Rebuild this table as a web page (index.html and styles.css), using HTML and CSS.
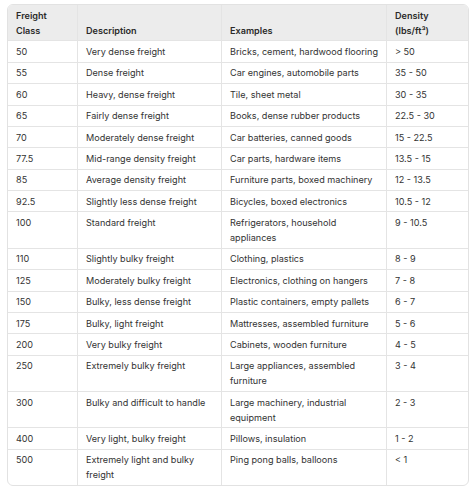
FILE: index.html
```html
<!DOCTYPE html>
<html lang="en">
<head>
<meta charset="utf-8">
<title>Freight Classes</title>
<link rel="stylesheet" href="styles.css">
</head>
<body>
<div class="table-wrap">
<table class="freight">
<thead>
<tr><th class="c1">Freight Class</th><th class="c2">Description</th><th class="c3">Examples</th><th class="c4">Density (lbs/ft³)</th></tr>
</thead>
<tbody>
<tr><td>50</td><td>Very dense freight</td><td>Bricks, cement, hardwood flooring</td><td>&gt; 50</td></tr>
<tr><td>55</td><td>Dense freight</td><td>Car engines, automobile parts</td><td>35 - 50</td></tr>
<tr><td>60</td><td>Heavy, dense freight</td><td>Tile, sheet metal</td><td>30 - 35</td></tr>
<tr><td>65</td><td>Fairly dense freight</td><td>Books, dense rubber products</td><td>22.5 - 30</td></tr>
<tr><td>70</td><td>Moderately dense freight</td><td>Car batteries, canned goods</td><td>15 - 22.5</td></tr>
<tr><td>77.5</td><td>Mid-range density freight</td><td>Car parts, hardware items</td><td>13.5 - 15</td></tr>
<tr><td>85</td><td>Average density freight</td><td>Furniture parts, boxed machinery</td><td>12 - 13.5</td></tr>
<tr><td>92.5</td><td>Slightly less dense freight</td><td>Bicycles, boxed electronics</td><td>10.5 - 12</td></tr>
<tr><td>100</td><td>Standard freight</td><td>Refrigerators, household appliances</td><td>9 - 10.5</td></tr>
<tr><td>110</td><td>Slightly bulky freight</td><td>Clothing, plastics</td><td>8 - 9</td></tr>
<tr><td>125</td><td>Moderately bulky freight</td><td>Electronics, clothing on hangers</td><td>7 - 8</td></tr>
<tr><td>150</td><td>Bulky, less dense freight</td><td>Plastic containers, empty pallets</td><td>6 - 7</td></tr>
<tr><td>175</td><td>Bulky, light freight</td><td>Mattresses, assembled furniture</td><td>5 - 6</td></tr>
<tr><td>200</td><td>Very bulky freight</td><td>Cabinets, wooden furniture</td><td>4 - 5</td></tr>
<tr><td>250</td><td>Extremely bulky freight</td><td>Large appliances, assembled furniture</td><td>3 - 4</td></tr>
<tr><td>300</td><td>Bulky and difficult to handle</td><td>Large machinery, industrial equipment</td><td>2 - 3</td></tr>
<tr><td>400</td><td>Very light, bulky freight</td><td>Pillows, insulation</td><td>1 - 2</td></tr>
<tr><td>500</td><td>Extremely light and bulky freight</td><td>Ping pong balls, balloons</td><td>&lt; 1</td></tr>
</tbody>
</table>
</div>
</body>
</html>
```
FILE: styles.css
```css
html, body {
  margin: 0;
  padding: 0;
  background: #ffffff;
}
body {
  padding: 4px 0 0 7px;
  font-family: Inter, "Liberation Sans", sans-serif;
  font-size: 9.1px;
  line-height: 15px;
  color: #333333;
}
.table-wrap {
  width: 462px;
  border: 1px solid #e2e2e2;
  border-radius: 6px;
  overflow: hidden;
  box-sizing: border-box;
}
.freight {
  width: 100%;
  border-collapse: separate;
  border-spacing: 0;
  table-layout: fixed;
}
.freight th,
.freight td {
  box-sizing: border-box;
  padding: 2.7px 7px 2.7px 8px;
  text-align: left;
  border-right: 1px solid #e4e4e4;
  border-bottom: 1px solid #e4e4e4;
}
.freight th:last-child,
.freight td:last-child {
  border-right: none;
}
.freight tbody tr:last-child td {
  border-bottom: none;
}
.freight th {
  background: #ececec;
  font-weight: 600;
  color: #2a2a2a;
  vertical-align: bottom;
}
.freight td {
  vertical-align: top;
}
.c1 { width: 70px; }
.c2 { width: 144px; }
.c3 { width: 165px; }
.c4 { width: 83px; }
```
